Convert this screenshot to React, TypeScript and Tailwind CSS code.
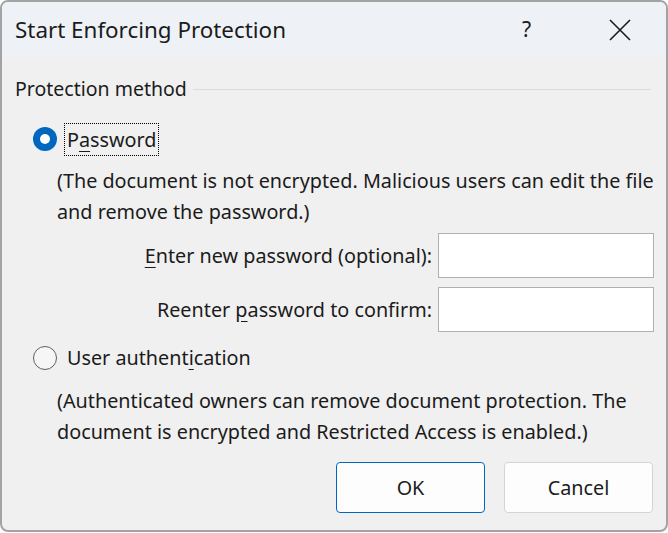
import React from 'react';

const font = { fontFamily: '"Noto Sans", "Open Sans", sans-serif' };

const Radio = ({ checked }: { checked?: boolean }) =>
  checked ? (
    <span className="w-[24px] h-[24px] rounded-full bg-[#0067c0] flex items-center justify-center shrink-0">
      <span className="w-[10px] h-[10px] rounded-full bg-white" />
    </span>
  ) : (
    <span className="w-[24px] h-[24px] rounded-full border-[1.5px] border-[#5f5f5f] bg-[#f6f6f6] shrink-0" />
  );

export default function App() {
  return (
    <div className="w-[668px] h-[533px] bg-white text-[#1b1b1b]" style={font}>
      <div className="w-full h-[532px] border-2 border-[#a3a3a3] rounded-[8px] overflow-hidden flex flex-col bg-[#f0f0f0]">
        {/* title bar */}
        <div className="h-[55px] bg-[#eef2f6] flex items-center pl-[13px] shrink-0">
          <span className="text-[22.4px]">Start Enforcing Protection</span>
          <span className="ml-auto text-[21px] mr-[78px]">?</span>
          <svg width="22" height="22" viewBox="0 0 22 22" className="mr-[35px]">
            <path d="M1 1 L21 21 M21 1 L1 21" stroke="#1b1b1b" strokeWidth="1.6" />
          </svg>
        </div>

        {/* body */}
        <div className="flex-1 flex flex-col px-[13px] pt-[18px] whitespace-nowrap">
          <div className="flex items-center gap-[6px] h-[28px]">
            <span className="text-[19.5px]">Protection method</span>
            <div className="flex-1 h-px bg-[#dcdcdc] mr-[2px]" />
          </div>

          <div className="flex items-center mt-[19px] ml-[18px] h-[34px]">
            <Radio checked />
            <span className="ml-[7px] px-[2px] border border-dotted border-black text-[19.8px] leading-[31px]">
              P<span className="underline underline-offset-[4px]">a</span>ssword
            </span>
          </div>

          <p className="ml-[42px] mt-[9px] text-[19.8px] leading-[31px]">
            (The document is not encrypted. Malicious users can edit the file
            <br />
            and remove the password.)
          </p>

          <div className="flex flex-col gap-[9px] mt-[6px] items-end mr-[-1px]">
            <div className="flex items-center gap-[6px]">
              <span className="text-[19.8px]">
                <span className="underline underline-offset-[4px]">E</span>nter new password (optional):
              </span>
              <div className="w-[216px] h-[45px] bg-white border border-[#b0b0b0]" />
            </div>
            <div className="flex items-center gap-[6px]">
              <span className="text-[19.8px]">
                Reenter <span className="underline underline-offset-[4px]">p</span>assword to confirm:
              </span>
              <div className="w-[216px] h-[45px] bg-white border border-[#b0b0b0]" />
            </div>
          </div>

          <div className="flex items-center mt-[11px] ml-[18px] h-[30px]">
            <Radio />
            <span className="ml-[10px] text-[19.8px]">
              User authent<span className="underline underline-offset-[4px]">i</span>cation
            </span>
          </div>

          <p className="ml-[42px] mt-[12px] text-[19.8px] leading-[31px]">
            (Authenticated owners can remove document protection. The
            <br />
            document is encrypted and Restricted Access is enabled.)
          </p>

          <div className="flex justify-end gap-[19px] mt-[15px]">
            <button className="w-[149px] h-[51px] bg-[#fdfdfd] border border-[#0067c0] rounded-[4px] text-[19.8px]">
              OK
            </button>
            <button className="w-[149px] h-[51px] bg-[#fdfdfd] border border-[#d4d4d4] rounded-[4px] text-[19.8px]">
              Cancel
            </button>
          </div>
        </div>
      </div>
    </div>
  );
}
